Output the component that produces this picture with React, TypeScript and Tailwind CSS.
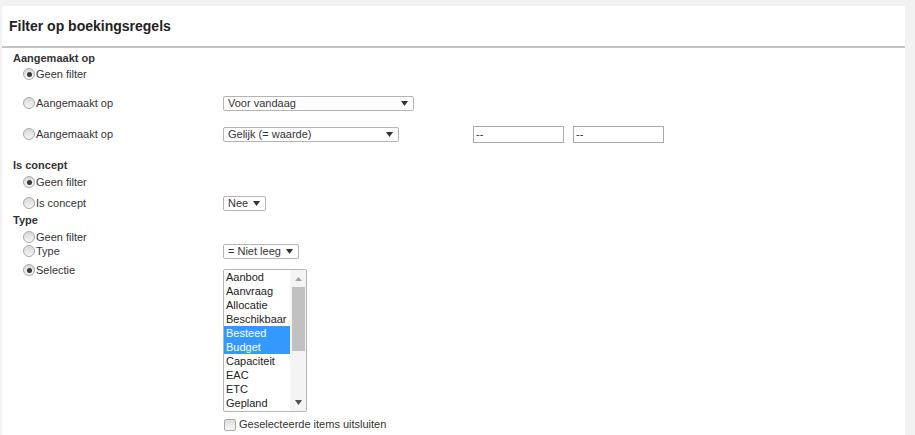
import type { ReactNode } from 'react';

const font = { fontFamily: '"Liberation Sans", Arial, sans-serif' };

const types = ['Aanbod', 'Aanvraag', 'Allocatie', 'Beschikbaar', 'Besteed', 'Budget', 'Capaciteit', 'EAC', 'ETC', 'Gepland'];
const selected = ['Besteed', 'Budget'];

function Radio({ checked }: { checked?: boolean }) {
  return (
    <span className="w-[12px] h-[12px] shrink-0 rounded-full border border-[#a9a9a9] bg-linear-to-b from-[#d9d9d9] to-[#f6f6f6] flex items-center justify-center">
      {checked && <span className="w-[5px] h-[5px] rounded-full bg-[#3a3a3a]" />}
    </span>
  );
}

function Arrow({ color = '#333' }: { color?: string }) {
  return (
    <svg width="7" height="5" viewBox="0 0 7 5" className="shrink-0">
      <polygon points="0,0 7,0 3.5,5" fill={color} />
    </svg>
  );
}

function Select({ label, width }: { label: string; width?: string }) {
  return (
    <div
      className={`h-[15px] border border-[#b4b4b4] rounded-[2px] flex items-center justify-between pl-[4px] pr-[5px] gap-[5px] ${width ?? ''}`}
    >
      <span className="leading-none">{label}</span>
      <Arrow />
    </div>
  );
}

function Row({ label, checked, className = '', children }: { label: string; checked?: boolean; className?: string; children?: ReactNode }) {
  return (
    <div className={`flex items-center ${className}`}>
      <div className="w-[210px] shrink-0 pl-[10px] flex items-center">
        <Radio checked={checked} />
        <span className="ml-[1px] leading-none">{label}</span>
      </div>
      {children}
    </div>
  );
}

function Heading({ children, className = '' }: { children: ReactNode; className?: string }) {
  return <div className={`font-bold h-[14px] leading-[14px] ${className}`}>{children}</div>;
}

export default function App() {
  return (
    <div className="min-h-screen bg-[#f2f2f2] pt-[6px] pl-[2px] pr-[10px] text-[11px] text-[#333]" style={font}>
      <div className="bg-white min-h-[429px]">
        {/* Header */}
        <div className="h-[42px] flex items-center pl-[7px] border-b-2 border-[#c4c4c4]">
          <h1 className="text-[14px] font-bold text-[#222]">Filter op boekingsregels</h1>
        </div>

        <div className="pl-[11px]">
          {/* Aangemaakt op */}
          <Heading className="mt-[3px]">Aangemaakt op</Heading>
          <Row label="Geen filter" checked className="h-[14px] mt-[2px]" />
          <Row label="Aangemaakt op" className="h-[16px] mt-[14px]">
            <Select label="Voor vandaag" width="w-[191px]" />
          </Row>
          <Row label="Aangemaakt op" className="h-[18px] mt-[14px]">
            <Select label="Gelijk (= waarde)" width="w-[176px]" />
            <div className="ml-[74px] w-[91px] h-[17px] border border-[#a9a9a9] flex items-center pl-[2px] leading-none">--</div>
            <div className="ml-[9px] w-[91px] h-[17px] border border-[#a9a9a9] flex items-center pl-[2px] leading-none">--</div>
          </Row>

          {/* Is concept */}
          <Heading className="mt-[15px]">Is concept</Heading>
          <Row label="Geen filter" checked className="h-[14px] mt-[3px]" />
          <Row label="Is concept" className="h-[16px] mt-[6px]">
            <Select label="Nee" />
          </Row>

          {/* Type */}
          <Heading className="mt-[2px]">Type</Heading>
          <Row label="Geen filter" className="h-[12px] mt-[4px]" />
          <Row label="Type" className="h-[16px]">
            <Select label="= Niet leeg" />
          </Row>

          <div className="flex items-start mt-[4px]">
            <div className="w-[210px] shrink-0 pl-[10px] flex items-center h-[14px]">
              <Radio checked />
              <span className="ml-[1px] leading-none">Selectie</span>
            </div>
            <div className="mt-[6px] w-[84px] h-[143px] border border-[#b4b4b4] rounded-[2px] flex overflow-hidden text-[#222]">
              <div className="flex-1">
                {types.map((t) => (
                  <div
                    key={t}
                    className={`h-[14px] leading-[14px] pl-[2px] whitespace-nowrap ${selected.includes(t) ? 'bg-[#3399ff] text-white' : ''}`}
                  >
                    {t}
                  </div>
                ))}
              </div>
              <div className="w-[16px] bg-[#f4f4f4] flex flex-col items-center">
                <div className="h-[17px] flex items-center justify-center">
                  <svg width="7" height="4" viewBox="0 0 7 4">
                    <polygon points="0,4 7,4 3.5,0" fill="#a3a3a3" />
                  </svg>
                </div>
                <div className="w-[13px] h-[64px] bg-[#c1c1c1]" />
                <div className="flex-1" />
                <div className="h-[17px] flex items-center justify-center">
                  <Arrow color="#505050" />
                </div>
              </div>
            </div>
          </div>

          {/* Exclude */}
          <div className="flex items-center mt-[6px] h-[13px] pl-[211px]">
            <span className="w-[12px] h-[12px] rounded-[2px] border border-[#a9a9a9] bg-linear-to-b from-[#dedede] to-[#f6f6f6]" />
            <span className="ml-[3px] leading-none">Geselecteerde items uitsluiten</span>
          </div>
        </div>
      </div>
    </div>
  );
}
